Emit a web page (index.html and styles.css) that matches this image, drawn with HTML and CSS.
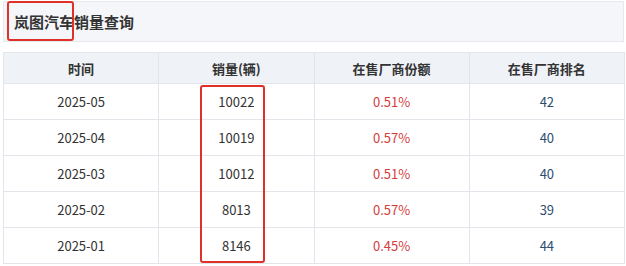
FILE: index.html
```html
<!DOCTYPE html>
<html lang="zh">
<head>
<meta charset="utf-8">
<link rel="stylesheet" href="styles.css">
</head>
<body>
<div class="page">
  <div class="titlebar">
    <h1 class="title">岚图汽车销量查询</h1>
    <span class="mark mark-title"></span>
  </div>
  <div class="table-wrap">
    <table class="sales">
      <thead>
        <tr><th>时间</th><th>销量(辆)</th><th>在售厂商份额</th><th>在售厂商排名</th></tr>
      </thead>
      <tbody>
        <tr><td>2025-05</td><td>10022</td><td class="share">0.51%</td><td class="rank">42</td></tr>
        <tr><td>2025-04</td><td>10019</td><td class="share">0.57%</td><td class="rank">40</td></tr>
        <tr><td>2025-03</td><td>10012</td><td class="share">0.51%</td><td class="rank">40</td></tr>
        <tr><td>2025-02</td><td>8013</td><td class="share">0.57%</td><td class="rank">39</td></tr>
        <tr><td>2025-01</td><td>8146</td><td class="share">0.45%</td><td class="rank">44</td></tr>
      </tbody>
    </table>
    <span class="mark mark-col"></span>
  </div>
</div>
</body>
</html>
```
FILE: styles.css
```css
* { box-sizing: border-box; }
html, body { margin: 0; padding: 0; background: #fff; }
body {
  font-family: "Noto Sans CJK SC", "Noto Sans", sans-serif;
  color: #333;
  width: 626px;
  height: 266px;
  overflow: hidden;
}
.page {
  padding: 1px 2px 0 3px;
}
.titlebar {
  position: relative;
  height: 41px;
  background: #f5f6f9;
  border: 1px solid #e6e8ec;
  display: flex;
  align-items: center;
  padding-left: 10px;
}
.title {
  margin: 0;
  font-size: 15px;
  font-weight: bold;
  color: #333;
  letter-spacing: 0;
}
.mark {
  position: absolute;
  border: 2px solid #e0302a;
  border-radius: 3px;
  pointer-events: none;
}
.mark-title {
  left: 3px;
  top: -1px;
  width: 67px;
  height: 40px;
}
.table-wrap {
  position: relative;
  margin-top: 10px;
}
.sales {
  width: 622px;
  border-collapse: collapse;
  table-layout: fixed;
  font-size: 13px;
}
.sales th, .sales td {
  border: 1px solid #e2e5ea;
  text-align: center;
  padding: 0;
}
.sales th {
  height: 31px;
  background: #eff2f7;
  font-weight: bold;
  color: #333;
  font-size: 13px;
}
.sales td {
  height: 36px;
  color: #333;
}
.sales td.share { color: #d53b3b; }
.sales td.rank { color: #2e4d6e; }
.mark-col {
  left: 197px;
  top: 33px;
  width: 65px;
  height: 178px;
}
```
